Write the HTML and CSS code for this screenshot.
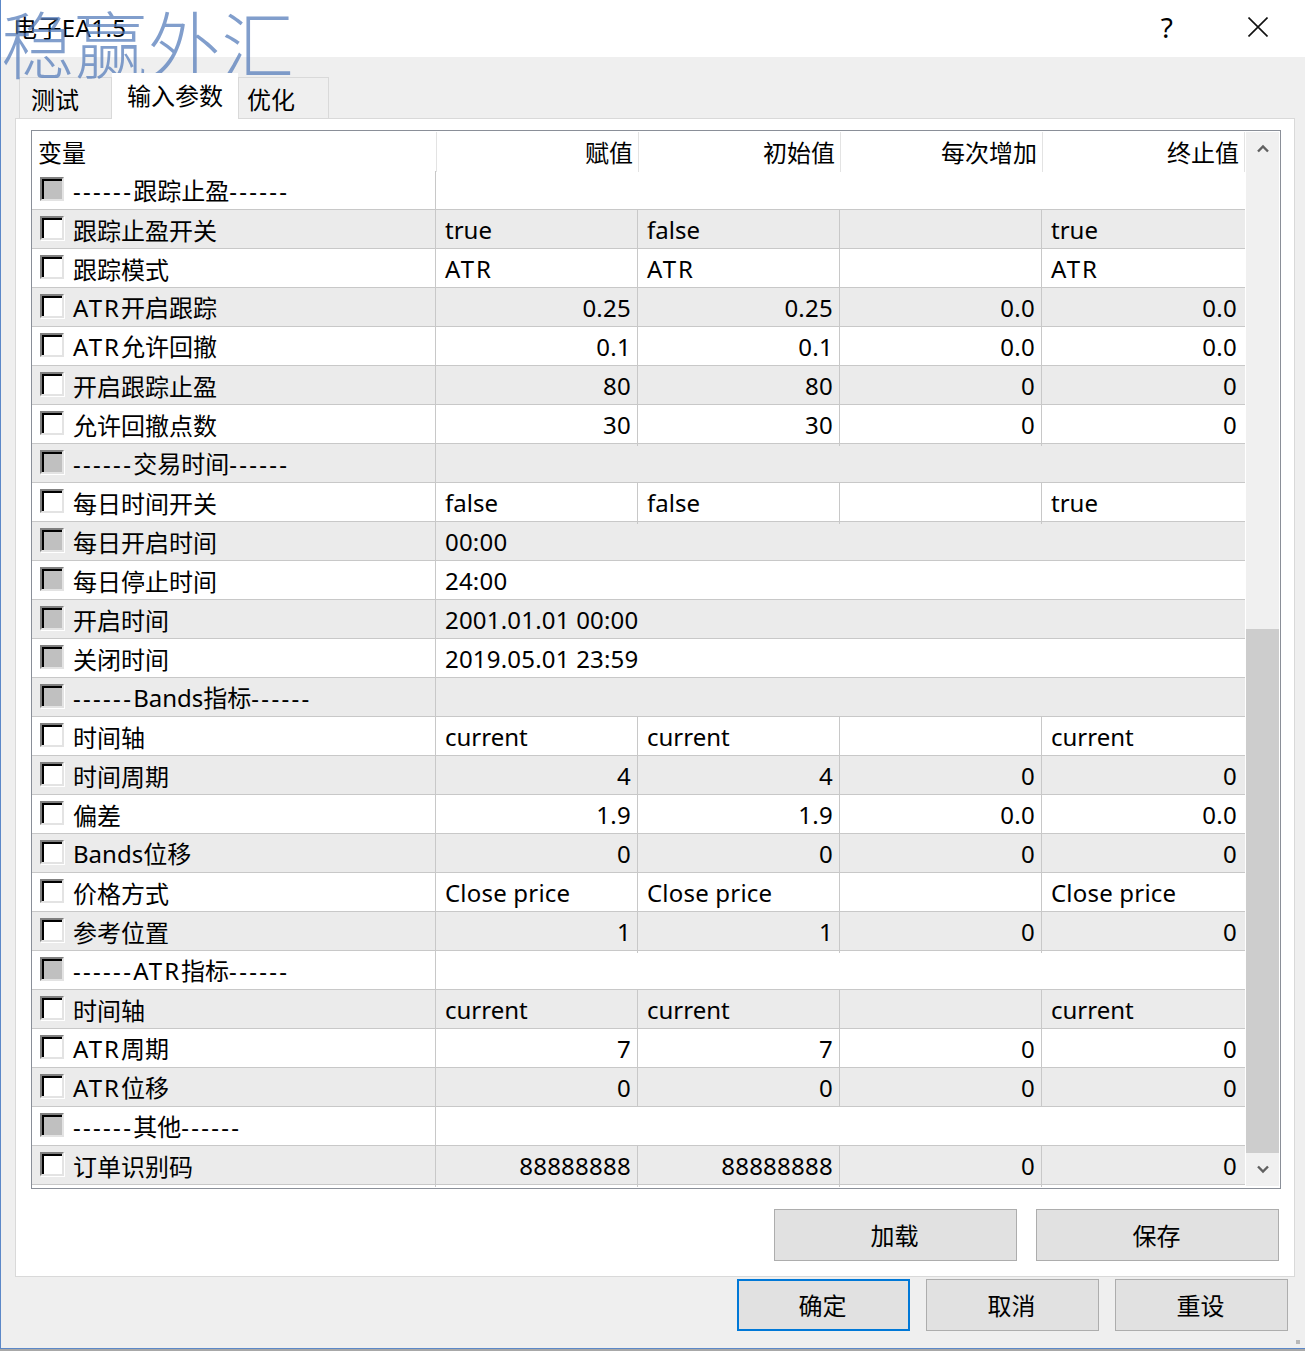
FILE: index.html
```html
<!DOCTYPE html>
<html>
<head>
	<title>电子EA1.5</title>
	<meta charset="utf-8">
	<link rel="stylesheet" href="styles.css">
</head>
<body>
	<div class="window">
		<div class="title_bar">
			<div class="title_text">电子EA1.5</div>
			<div class="title_help">?</div>
			<svg class="title_close" width="20" height="20" viewBox="0 0 20 20"><path d="M0.5 0.5L19.5 19.5M19.5 0.5L0.5 19.5" stroke="#111" stroke-width="1.6" fill="none"/></svg>
		</div>
		<div class="watermark">稳赢外汇</div>
		<div class="tabs">
			<div class="tab">测试</div>
			<div class="tab tab_active">输入参数</div>
			<div class="tab tab_last">优化</div>
		</div>
		<div class="panel">
			<div class="grid_box">
				<div class="grid">
					<div class="head">
						<div class="head_cell head_name">变量</div>
						<div class="head_cell">赋值</div>
						<div class="head_cell">初始值</div>
						<div class="head_cell">每次增加</div>
						<div class="head_cell">终止值</div>
					</div>
					<div class="row"><div class="cell name name_up"><i class="check off"></i><span class="dash">------</span>跟踪止盈<span class="dash">------</span></div><div class="cell wide"></div></div>
					<div class="row"><div class="cell name"><i class="check"></i>跟踪止盈开关</div><div class="cell">true</div><div class="cell">false</div><div class="cell"></div><div class="cell">true</div></div>
					<div class="row"><div class="cell name"><i class="check"></i>跟踪模式</div><div class="cell caps">ATR</div><div class="cell caps">ATR</div><div class="cell"></div><div class="cell caps">ATR</div></div>
					<div class="row"><div class="cell name name_up"><i class="check"></i><span class="caps">ATR</span>开启跟踪</div><div class="cell num">0.25</div><div class="cell num">0.25</div><div class="cell num">0.0</div><div class="cell num">0.0</div></div>
					<div class="row"><div class="cell name name_up"><i class="check"></i><span class="caps">ATR</span>允许回撤</div><div class="cell num">0.1</div><div class="cell num">0.1</div><div class="cell num">0.0</div><div class="cell num">0.0</div></div>
					<div class="row"><div class="cell name"><i class="check"></i>开启跟踪止盈</div><div class="cell num">80</div><div class="cell num">80</div><div class="cell num">0</div><div class="cell num">0</div></div>
					<div class="row"><div class="cell name"><i class="check"></i>允许回撤点数</div><div class="cell num">30</div><div class="cell num">30</div><div class="cell num">0</div><div class="cell num">0</div></div>
					<div class="row"><div class="cell name name_up"><i class="check off"></i><span class="dash">------</span>交易时间<span class="dash">------</span></div><div class="cell wide"></div></div>
					<div class="row"><div class="cell name"><i class="check"></i>每日时间开关</div><div class="cell">false</div><div class="cell">false</div><div class="cell"></div><div class="cell">true</div></div>
					<div class="row"><div class="cell name"><i class="check off"></i>每日开启时间</div><div class="cell wide">00:00</div></div>
					<div class="row"><div class="cell name"><i class="check off"></i>每日停止时间</div><div class="cell wide">24:00</div></div>
					<div class="row"><div class="cell name"><i class="check off"></i>开启时间</div><div class="cell wide">2001.01.01 00:00</div></div>
					<div class="row"><div class="cell name"><i class="check off"></i>关闭时间</div><div class="cell wide">2019.05.01 23:59</div></div>
					<div class="row"><div class="cell name name_up"><i class="check off"></i><span class="dash">------</span>Bands指标<span class="dash">------</span></div><div class="cell wide"></div></div>
					<div class="row"><div class="cell name"><i class="check"></i>时间轴</div><div class="cell">current</div><div class="cell">current</div><div class="cell"></div><div class="cell">current</div></div>
					<div class="row"><div class="cell name"><i class="check"></i>时间周期</div><div class="cell num">4</div><div class="cell num">4</div><div class="cell num">0</div><div class="cell num">0</div></div>
					<div class="row"><div class="cell name"><i class="check"></i>偏差</div><div class="cell num">1.9</div><div class="cell num">1.9</div><div class="cell num">0.0</div><div class="cell num">0.0</div></div>
					<div class="row"><div class="cell name name_up"><i class="check"></i>Bands位移</div><div class="cell num">0</div><div class="cell num">0</div><div class="cell num">0</div><div class="cell num">0</div></div>
					<div class="row"><div class="cell name"><i class="check"></i>价格方式</div><div class="cell spaced">Close price</div><div class="cell spaced">Close price</div><div class="cell"></div><div class="cell spaced">Close price</div></div>
					<div class="row"><div class="cell name"><i class="check"></i>参考位置</div><div class="cell num">1</div><div class="cell num">1</div><div class="cell num">0</div><div class="cell num">0</div></div>
					<div class="row"><div class="cell name name_up"><i class="check off"></i><span class="dash">------</span><span class="caps">ATR</span>指标<span class="dash">------</span></div><div class="cell wide"></div></div>
					<div class="row"><div class="cell name"><i class="check"></i>时间轴</div><div class="cell">current</div><div class="cell">current</div><div class="cell"></div><div class="cell">current</div></div>
					<div class="row"><div class="cell name name_up"><i class="check"></i><span class="caps">ATR</span>周期</div><div class="cell num">7</div><div class="cell num">7</div><div class="cell num">0</div><div class="cell num">0</div></div>
					<div class="row"><div class="cell name name_up"><i class="check"></i><span class="caps">ATR</span>位移</div><div class="cell num">0</div><div class="cell num">0</div><div class="cell num">0</div><div class="cell num">0</div></div>
					<div class="row"><div class="cell name name_up"><i class="check off"></i><span class="dash">------</span>其他<span class="dash">------</span></div><div class="cell wide"></div></div>
					<div class="row"><div class="cell name"><i class="check"></i>订单识别码</div><div class="cell num">88888888</div><div class="cell num">88888888</div><div class="cell num">0</div><div class="cell num">0</div></div>
				</div>
				<div class="scrollbar">
					<div class="scroll_btn">
						<svg width="12" height="9" viewBox="0 0 12 9"><path d="M1 7.5L6 2.5L11 7.5" stroke="#606060" stroke-width="2.4" fill="none"/></svg>
					</div>
					<div class="scroll_space"></div>
					<div class="scroll_thumb"></div>
					<div class="scroll_btn">
						<svg width="12" height="9" viewBox="0 0 12 9"><path d="M1 1.5L6 6.5L11 1.5" stroke="#606060" stroke-width="2.4" fill="none"/></svg>
					</div>
				</div>
			</div>
			<div class="panel_btns">
				<div class="btn btn_wide">加载</div>
				<div class="btn btn_wide">保存</div>
			</div>
		</div>
		<div class="footer">
			<div class="btn btn_ok">确定</div>
			<div class="btn">取消</div>
			<div class="btn">重设</div>
		</div>
		<div class="grip"></div>
	</div>
</body>
</html>
```
FILE: styles.css
```css
*{
	box-sizing:border-box;
	margin:0;
	padding:0;
}
body{
	background:#a8a8a8;
	font-family:"Noto Sans","Noto Sans CJK SC",sans-serif;
	font-size:24px;
	color:#000;
}
.window{
	position:relative;
	width:1305px;
	height:1349px;
	background:#efefef;
	border-left:1px solid #5c88c8;
	border-bottom:1px solid #5c88c8;
}
.title_bar{
	height:57px;
	background:#fff;
	display:flex;
	align-items:center;
	padding:0 37px 4px 12px;
}
.title_text{
	flex:1;
	letter-spacing:.4px;
}
.title_help{
	margin-right:75px;
	font-size:28px;
	line-height:30px;
}
.watermark{
	position:absolute;
	top:0;
	left:0;
	font-family:"Noto Sans CJK SC",sans-serif;
	font-weight:300;
	font-size:73px;
	letter-spacing:.3px;
	line-height:82px;
	color:rgba(80,120,185,.72);
	white-space:nowrap;
}
.tabs{
	height:61px;
	padding-left:18px;
	display:flex;
	align-items:flex-end;
}
.tab{
	width:93px;
	height:41px;
	background:#efefef;
	border:1px solid #d9d9d9;
	border-bottom:none;
	padding-left:11px;
	line-height:44px;
}
.tab_active{
	position:relative;
	z-index:1;
	width:126px;
	height:46px;
	background:#fff;
	border:none;
	margin-bottom:-1px;
	padding-left:15px;
	line-height:46px;
}
.tab_last{
	width:91px;
	padding-left:8px;
}
.panel{
	width:1280px;
	height:1159px;
	margin-left:14px;
	background:#fff;
	border:1px solid #d9d9d9;
	padding:11px 0 0 15px;
}
.grid_box{
	width:1250px;
	height:1059px;
	border:1px solid #8a8f98;
	display:flex;
}
.grid{
	width:1213px;
}
.head{
	display:grid;
	grid-template-columns:405px 202px 202px 202px 202px;
	height:40px;
	padding-top:1px;
}
.head_cell{
	border-right:1px solid #e3e3e3;
	text-align:right;
	padding:2px 5px 0 0;
	line-height:38px;
}
.head_name{
	text-align:left;
	padding-left:6px;
}
.row{
	display:grid;
	grid-template-columns:404px 202px 202px 202px 203px;
	height:39px;
	border-bottom:1px solid #c8c8c8;
}
.row:nth-of-type(odd){
	background:#ebebeb;
}
.cell{
	border-right:1px solid #c8c8c8;
	padding:0 6px 0 9px;
	line-height:39px;
	white-space:nowrap;
}
.cell:last-child{
	border-right:none;
	padding-right:8px;
}
.wide{
	grid-column:2 / -1;
	letter-spacing:.2px;
}
.num{
	text-align:right;
	letter-spacing:.25px;
}
.spaced{
	letter-spacing:.2px;
}
.caps{
	letter-spacing:2px;
}
.dash{
	letter-spacing:2.3px;
}
.name{
	display:flex;
	padding-left:8px;
	line-height:41px;
}
.name_up{
	line-height:39px;
}
.check{
	display:block;
	flex:none;
	width:24px;
	height:24px;
	margin:6px 9px 0 0;
	background:#fff;
	border:2px solid;
	border-color:#808080 #e3e3e3 #e3e3e3 #808080;
	box-shadow:inset 2px 2px 0 #000,1px 1px 0 #fff;
}
.off{
	background:#c0c0c0;
}
.scrollbar{
	width:33px;
	height:1054px;
	margin:1px 0 0 1px;
	background:#f0f0f0;
	display:flex;
	flex-direction:column;
}
.scroll_btn{
	height:33px;
	display:flex;
	align-items:center;
	justify-content:center;
	flex:none;
}
.scroll_space{
	height:464px;
}
.scroll_thumb{
	flex:1;
	background:#cdcdcd;
}
.panel_btns{
	display:flex;
	justify-content:flex-end;
	gap:19px;
	margin-top:20px;
	padding-right:15px;
}
.btn{
	width:173px;
	height:52px;
	background:#e1e1e1;
	border:1px solid #adadad;
	padding-right:2px;
	text-align:center;
	line-height:52px;
}
.btn_wide{
	width:243px;
}
.footer{
	display:flex;
	justify-content:flex-end;
	gap:16px;
	margin-top:2px;
	padding-right:17px;
}
.btn_ok{
	border:2px solid #0078d7;
	line-height:50px;
}
.grip{
	position:absolute;
	right:5px;
	bottom:4px;
	width:4px;
	height:4px;
	background:#b8b8b8;
}
```
